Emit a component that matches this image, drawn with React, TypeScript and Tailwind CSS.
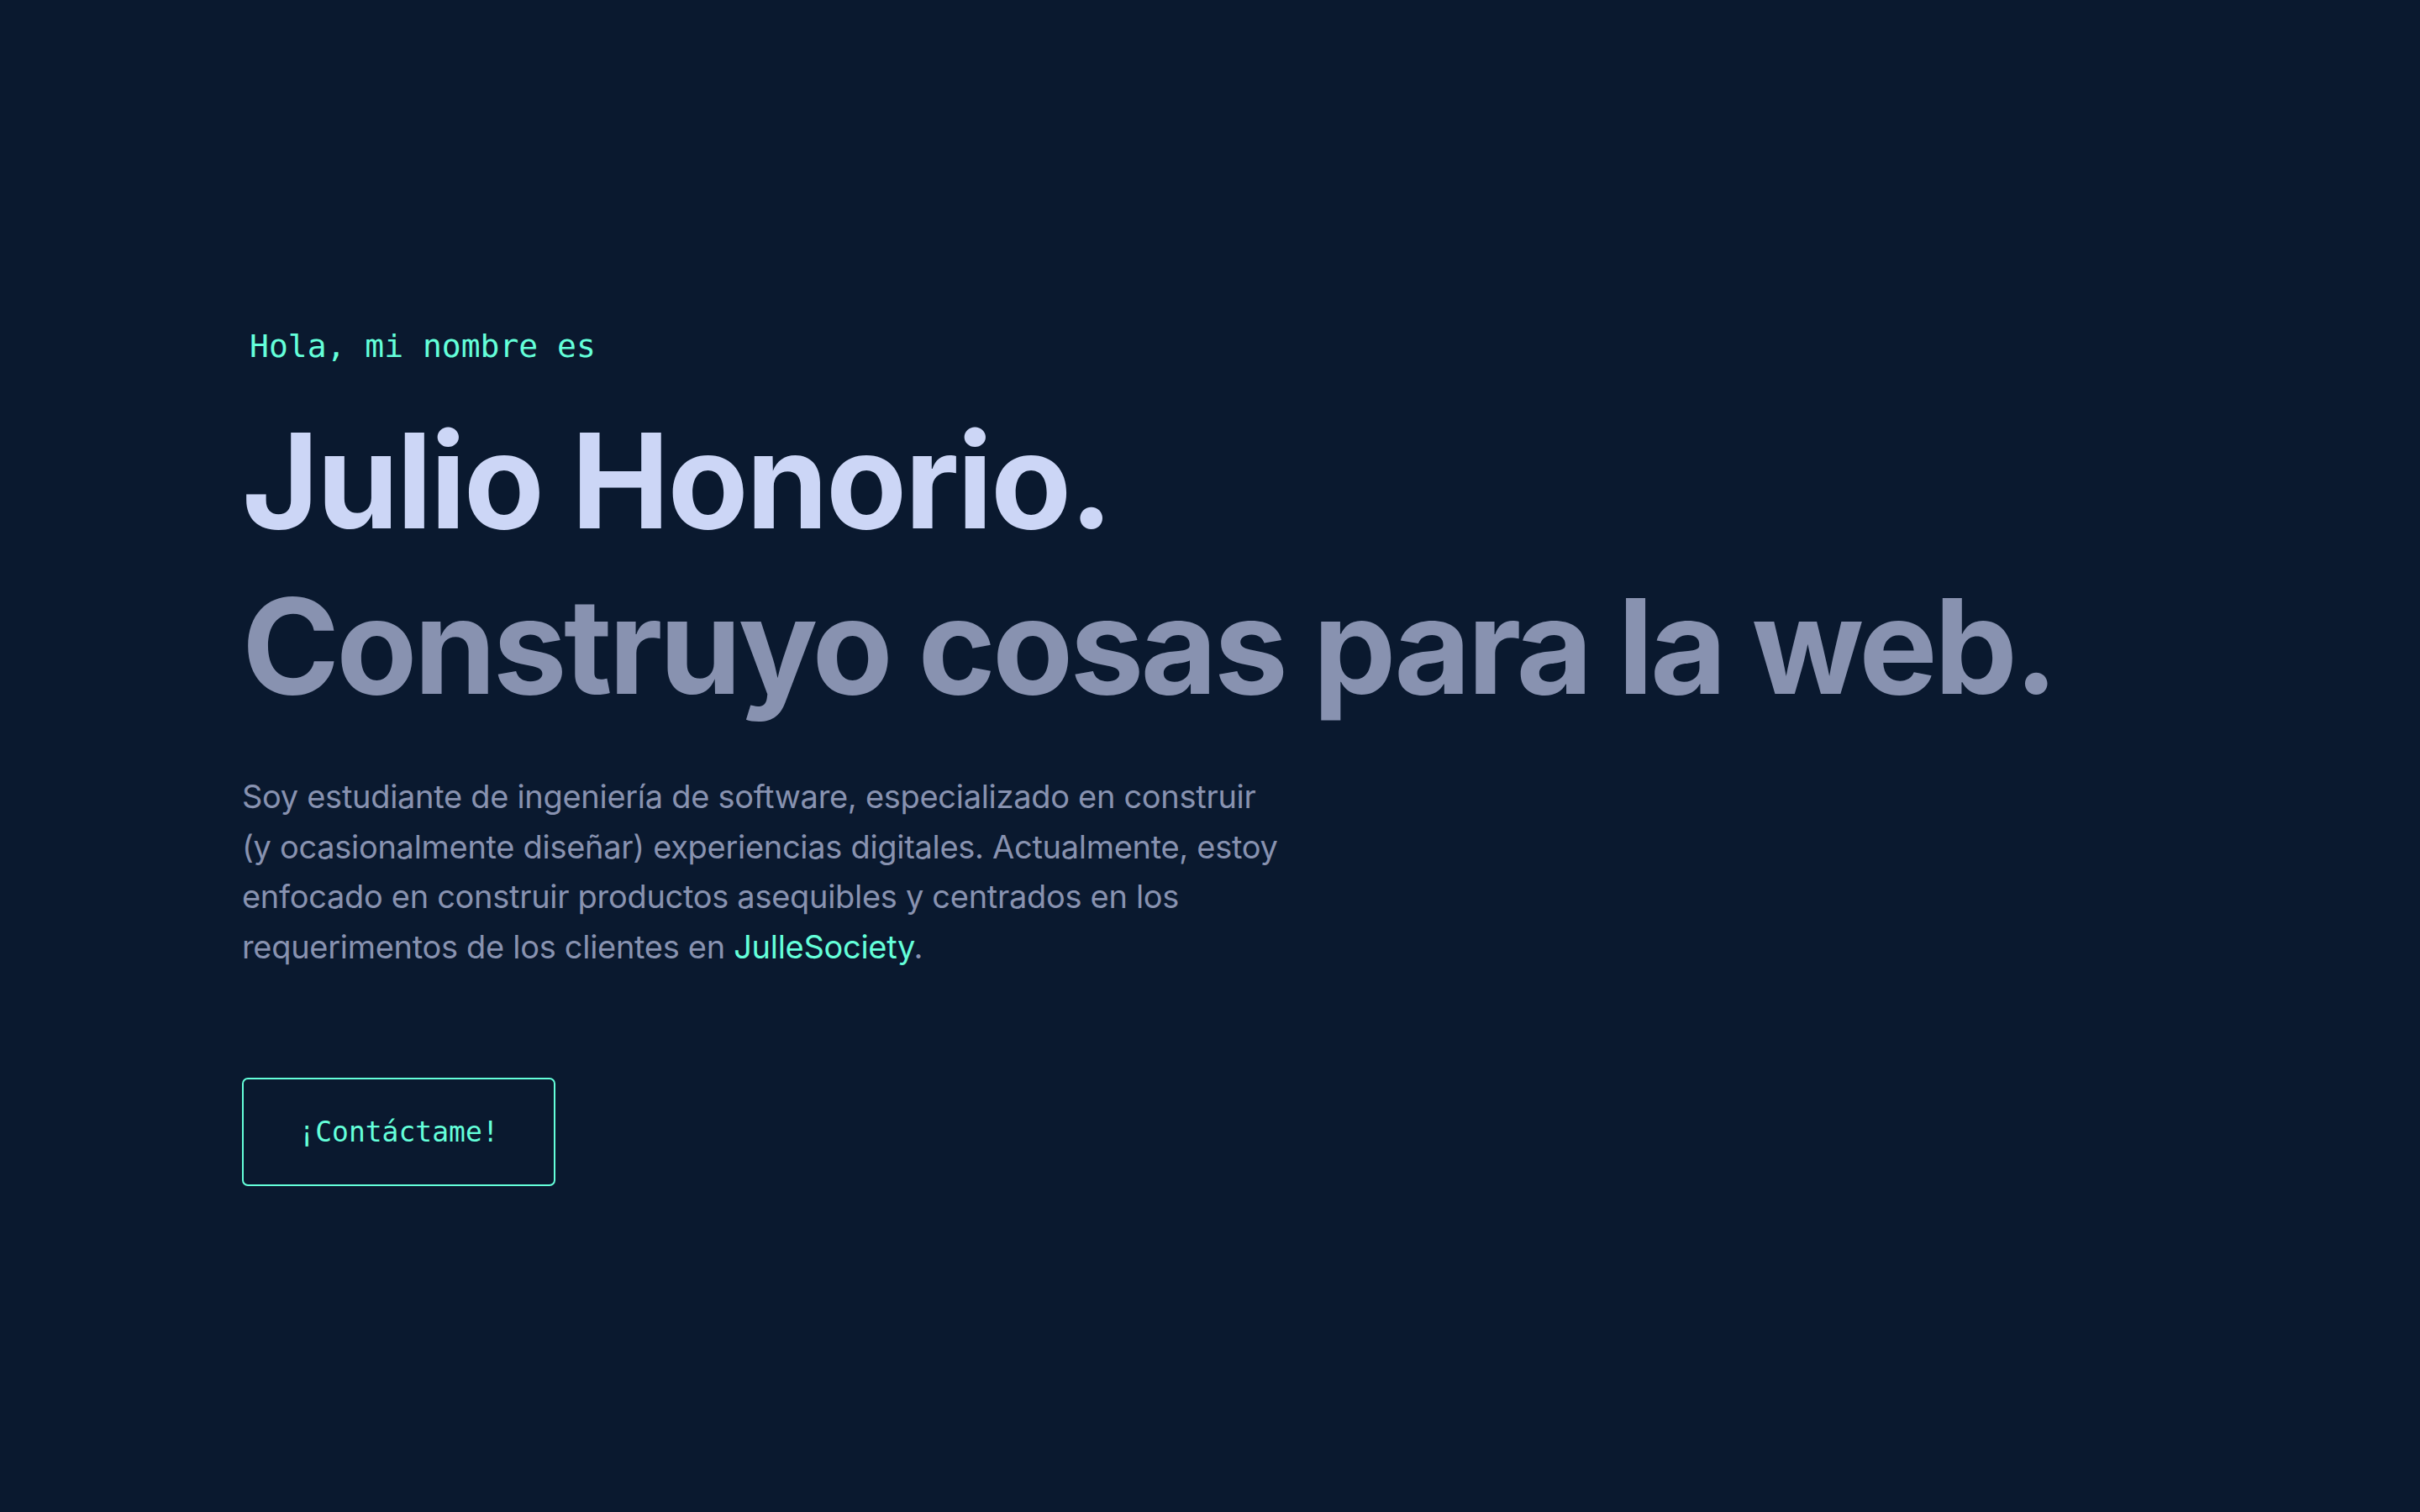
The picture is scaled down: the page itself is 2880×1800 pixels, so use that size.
import React from "react";

export default function App() {
  return (
    <div className="min-h-screen w-full bg-[#0a192f]" style={{ fontFamily: "Inter, 'Liberation Sans', sans-serif" }}>
      <section className="flex flex-col items-start pl-[288px] pt-[393px]">
        <h1 className="ml-[9px] text-[38px] leading-[38px] text-[#64ffda] font-normal" style={{ fontFamily: "'DejaVu Sans Mono', 'Liberation Mono', monospace" }}>
          Hola, mi nombre es
        </h1>
        <h2 className="mt-[55px] text-[157px] leading-[172px] font-bold text-[#ccd6f6] tracking-[-2.7px] whitespace-nowrap">
          Julio Honorio.
        </h2>
        <h3 className="mt-[25px] text-[157px] leading-[172px] font-bold text-[#8892b0] tracking-[-3.8px] whitespace-nowrap">
          Construyo cosas para la web.
        </h3>
        <p className="mt-[64px] text-[38px] leading-[59.5px] text-[#8892b0] tracking-[-0.3px]">
          Soy estudiante de ingeniería de software, especializado en construir
          <br />
          (y ocasionalmente diseñar) experiencias digitales. Actualmente, estoy
          <br />
          enfocado en construir productos asequibles y centrados en los
          <br />
          requerimentos de los clientes en <span className="text-[#64ffda]">JulleSociety</span>.
        </p>
        <button
          className="mt-[126px] flex h-[129px] w-[373px] items-center justify-center rounded-[7px] border-2 border-[#64ffda] bg-transparent text-[33px] text-[#64ffda]"
          style={{ fontFamily: "'DejaVu Sans Mono', 'Liberation Mono', monospace" }}
        >
          ¡Contáctame!
        </button>
      </section>
    </div>
  );
}
